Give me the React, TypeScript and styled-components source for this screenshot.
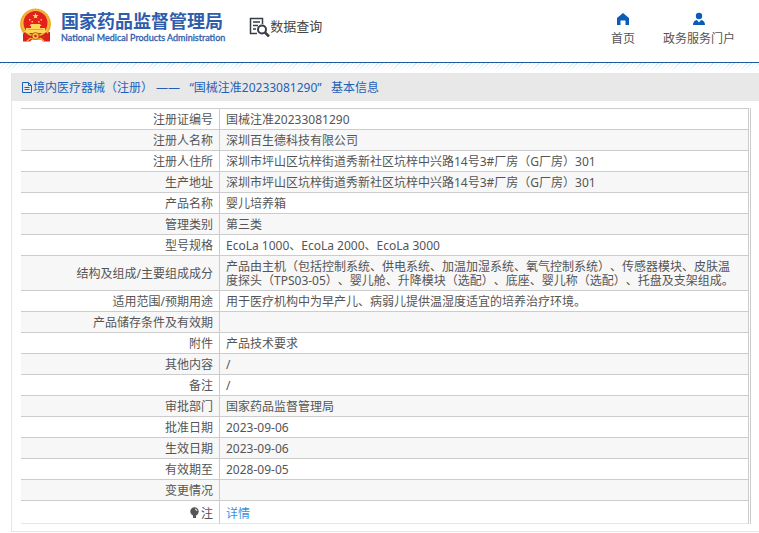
import React from 'react';
import styled, { createGlobalStyle } from 'styled-components';

const GlobalStyle = createGlobalStyle`
  * { box-sizing: border-box; }
  body {
    margin: 0;
    background: #fff;
    color: #555;
    font: 12px/14px "Noto Sans", "Noto Sans CJK SC", sans-serif;
    text-spacing-trim: space-all;
  }
`;

const Header = styled.header`
  display: flex;
  align-items: flex-start;
  height: 63px;
  padding: 0 24px 0 18px;
  border-bottom: 1px solid #1c5c9c;
`;

const Brand = styled.a`
  display: flex;
  gap: 6px;
  padding-top: 7px;
  color: #2f5dab;
  text-decoration: none;
`;

const BrandText = styled.span`
  display: flex;
  flex-direction: column;
  padding-top: 2px;
  white-space: nowrap;
`;

const BrandName = styled.strong`
  font: 700 18px/22px "Noto Sans CJK SC", sans-serif;
`;

const BrandEnglish = styled.span`
  font: 400 9px/14px Lato, sans-serif;
  -webkit-text-stroke: 0.3px #2f5dab;
`;

const Query = styled.a`
  display: flex;
  margin: 16px 0 0 24px;
  color: #444;
  font: 13px/20px "Noto Sans CJK SC", sans-serif;
  text-decoration: none;
  white-space: nowrap;
`;

const Nav = styled.nav`
  display: flex;
  gap: 28px;
  margin-left: auto;
  padding-top: 12px;
`;

const NavLink = styled.a`
  display: flex;
  flex-direction: column;
  align-items: center;
  gap: 5px;
  color: #555;
  line-height: 16px;
  text-decoration: none;
  white-space: nowrap;
`;

const Hatch = styled.div`
  height: 10px;
  background:
    linear-gradient(rgba(255, 255, 255, 0.1), #fff 80%),
    repeating-linear-gradient(135deg, #cfe6f2 0 1px, #fff 1px 3px);
`;

const Panel = styled.main`
  margin-left: 11px;
  border: solid #e6e6e6;
  border-width: 0 0 1px 1px;
`;

const PanelTitle = styled.h1`
  display: flex;
  align-items: center;
  height: 28px;
  margin: 0;
  padding: 2px 0 0 10px;
  background: #e8e8e8;
  color: #1e62b8;
  font-size: 12px;
  font-weight: 400;
  white-space: pre;
`;

const TableFrame = styled.div`
  margin: 7px 8px 7px 9px;
  padding-right: 1px;
  border-right: 1px solid #ccc;
`;

const Table = styled.table`
  width: 100%;
  border-collapse: separate;
  border-spacing: 0;
  border-top: 1px solid #ccc;
  border-right: 1px solid #ccc;
`;

const Label = styled.th`
  width: 199px;
  height: 21px;
  padding: 4px 6px 2px 0;
  border-right: 1px solid #ccc;
  border-bottom: 1px solid #ccc;
  font-weight: 400;
  text-align: right;
`;

const Value = styled.td`
  padding: 4px 12px 2px 6px;
  border-bottom: 1px solid #ccc;
`;

const Row = styled.tr`
  &:nth-child(even) { background: #f7f7f7; }
  &:last-child > * {
    height: 23px;
    padding-top: 6px;
    border-bottom-color: #e6e6e6;
  }
`;

const DetailLink = styled.a`
  color: #3d8fe0;
  text-decoration: none;
`;

const BulbMark = styled.svg`
  margin-right: 2px;
  vertical-align: -1px;
`;

const Emblem = () => (
  <svg width="37" height="37" viewBox="0 0 37 37" aria-hidden="true">
    <path d="M5 25v9.500h7l2-2h9l2 2h7V25z" fill="#d8201c" />
    <circle cx="17.500" cy="17" r="15.500" fill="#f6b83c" />
    <circle cx="17.500" cy="17" r="14.300" fill="none" stroke="#e89c2a" strokeWidth="1" strokeDasharray="2 1" />
    <circle cx="17.500" cy="16" r="12" fill="#e3201c" />
    <path d="M17.500 6l.8 2 2.200.1-1.700 1.400.6 2.100-1.900-1.200-1.800 1.200.6-2.100-1.700-1.400 2.200-.1z" fill="#ffe066" />
    <path d="M11 12h1.500v1.500H11zM13.500 14H15v1.500h-1.500zM20 14h1.500v1.500H20zM22.500 12H24v1.500h-1.500z" fill="#ffc24a" />
    <path d="M13 17h9l1.500 2h-12zM13 19h9v2h-9zM8 21h19v3H8zM6.500 24h22v2h-22z" fill="#ffd55c" />
    <path d="M10 22h15v.7H10z" fill="#ec8a2a" />
    <path d="M6 26q6 6 9 3M29 26q-6 6-9 3" fill="none" stroke="#d8201c" strokeWidth="2.500" />
    <circle cx="17.500" cy="29" r="3.500" fill="#f7c346" stroke="#ca6817" />
    <circle cx="17.500" cy="29" r="1.300" fill="#d8201c" />
    <path d="M9 34l4-3M26 34l-4-3" fill="none" stroke="#f6b83c" strokeWidth="1.500" />
  </svg>
);

const QueryIcon = () => (
  <svg width="21" height="21" viewBox="0 0 21 21" fill="none" stroke="#393d4a" aria-hidden="true">
    <path d="M8 17.500H1.500v-15h12V8M4 6h7M4 9.500h5M4 13h3" strokeWidth="1.500" />
    <circle cx="13" cy="13.500" r="4" strokeWidth="2" />
    <path d="M16 16.500l4 4" strokeWidth="2.500" />
  </svg>
);

const HomeIcon = () => (
  <svg width="14" height="14" viewBox="0 0 14 14" aria-hidden="true">
    <path d="M7 1l6 5v7H9.500V8.500h-5V13H1V6z" fill="#0b5cb8" />
  </svg>
);

const UserIcon = () => (
  <svg width="14" height="14" viewBox="0 0 14 14" fill="#0b5cb8" aria-hidden="true">
    <circle cx="7" cy="4" r="3.200" />
    <path d="M1 13c0-3 1.500-4.500 4-5l2 2.500L9 8c2.500.5 4 2 4 5z" />
  </svg>
);

const DocumentIcon = () => (
  <svg width="11" height="12" viewBox="0 0 11 12" fill="none" stroke="#1e62b8" aria-hidden="true">
    <path d="M6.500.500h-6v10h9v-7zM6.500.500v3h3M2.500 5.500h5M2.500 7.500h5" />
  </svg>
);

const BulbIcon = () => (
  <BulbMark width="9" height="12" viewBox="0 0 9 12" aria-hidden="true">
    <circle cx="4.500" cy="4.500" r="4.200" fill="#555" />
    <path d="M3 8h3v3H3z" fill="#555" />
    <path d="M5 2q1.800.2 2 2" fill="none" stroke="#fff" />
  </BulbMark>
);

const address = '深圳市坪山区坑梓街道秀新社区坑梓中兴路14号3#厂房（G厂房）301';

const records: [string, string][] = [
  ['注册证编号', '国械注准20233081290'],
  ['注册人名称', '深圳百生德科技有限公司'],
  ['注册人住所', address],
  ['生产地址', address],
  ['产品名称', '婴儿培养箱'],
  ['管理类别', '第三类'],
  ['型号规格', 'EcoLa 1000、EcoLa 2000、EcoLa 3000'],
  ['结构及组成/主要组成成分', '产品由主机（包括控制系统、供电系统、加温加湿系统、氧气控制系统）、传感器模块、皮肤温度探头（TPS03-05）、婴儿舱、升降模块（选配）、底座、婴儿称（选配）、托盘及支架组成。'],
  ['适用范围/预期用途', '用于医疗机构中为早产儿、病弱儿提供温湿度适宜的培养治疗环境。'],
  ['产品储存条件及有效期', ''],
  ['附件', '产品技术要求'],
  ['其他内容', '/'],
  ['备注', '/'],
  ['审批部门', '国家药品监督管理局'],
  ['批准日期', '2023-09-06'],
  ['生效日期', '2023-09-06'],
  ['有效期至', '2028-09-05'],
  ['变更情况', ''],
];

export default function App() {
  return (
    <>
      <GlobalStyle />
      <Header>
        <Brand href="#">
          <Emblem />
          <BrandText>
            <BrandName>国家药品监督管理局</BrandName>
            <BrandEnglish>National Medical Products Administration</BrandEnglish>
          </BrandText>
        </Brand>
        <Query href="#query"><QueryIcon />数据查询</Query>
        <Nav>
          <NavLink href="#home"><HomeIcon />首页</NavLink>
          <NavLink href="#services"><UserIcon />政务服务门户</NavLink>
        </Nav>
      </Header>
      <Hatch />
      <Panel>
        <PanelTitle><DocumentIcon />境内医疗器械（注册） ——   “国械注准20233081290”   基本信息</PanelTitle>
        <TableFrame>
          <Table>
            <tbody>
              {records.map(([label, value]) => (
                <Row key={label}>
                  <Label scope="row">{label}</Label>
                  <Value>{value}</Value>
                </Row>
              ))}
              <Row>
                <Label scope="row"><BulbIcon />注</Label>
                <Value><DetailLink href="#detail">详情</DetailLink></Value>
              </Row>
            </tbody>
          </Table>
        </TableFrame>
      </Panel>
    </>
  );
}
